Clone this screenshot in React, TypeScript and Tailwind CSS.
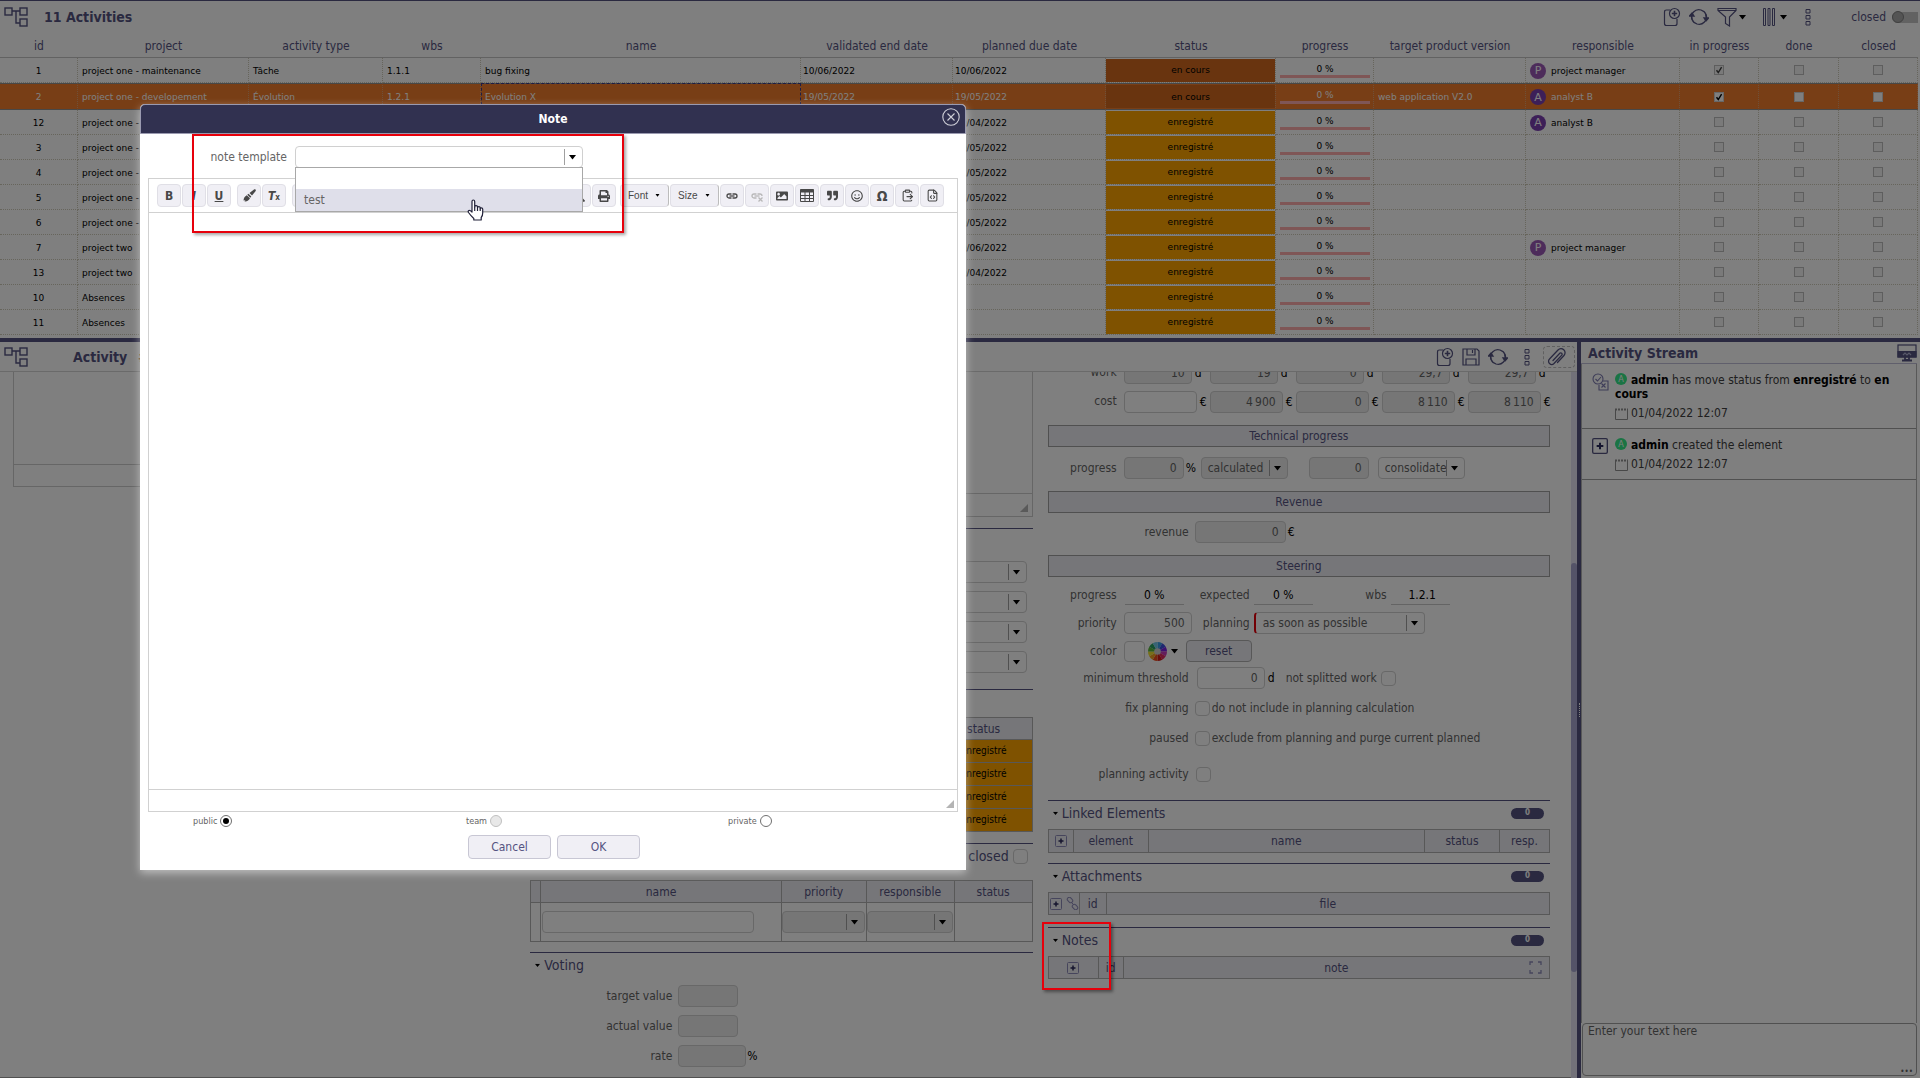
import type { ReactNode } from "react";
import { clsx } from "clsx";
import { ClipboardPaste, FileCode } from "lucide-react";
import {
  FaAlignCenter,
  FaAlignJustify,
  FaAlignLeft,
  FaAlignRight,
  FaHighlighter,
  FaImage,
  FaIndent,
  FaListOl,
  FaListUl,
  FaOutdent,
  FaPalette,
  FaPrint,
  FaQuoteRight,
  FaRegSmile,
  FaSearch,
  FaStrikethrough,
} from "react-icons/fa";

type Activity = {
  id: number;
  project: string;
  type?: string;
  wbs?: string;
  name?: string;
  validated?: string;
  planned?: string;
  status: "en cours" | "enregistré";
  version?: string;
  responsible?: string;
  inProgress?: boolean;
  selected?: boolean;
};

const activities: Activity[] = [
  { id: 1, project: "project one - maintenance", type: "Tâche", wbs: "1.1.1", name: "bug fixing", validated: "10/06/2022", planned: "10/06/2022", status: "en cours", responsible: "project manager", inProgress: true },
  { id: 2, project: "project one - developement", type: "Évolution", wbs: "1.2.1", name: "Evolution X", validated: "19/05/2022", planned: "19/05/2022", status: "en cours", version: "web application V2.0", responsible: "analyst B", inProgress: true, selected: true },
  { id: 12, project: "project one - maintenance", planned: "29/04/2022", status: "enregistré", responsible: "analyst B" },
  { id: 3, project: "project one - developement", planned: "10/05/2022", status: "enregistré" },
  { id: 4, project: "project one - developement", planned: "12/05/2022", status: "enregistré" },
  { id: 5, project: "project one - developement", planned: "17/05/2022", status: "enregistré" },
  { id: 6, project: "project one - developement", planned: "19/05/2022", status: "enregistré" },
  { id: 7, project: "project two", planned: "10/06/2022", status: "enregistré", responsible: "project manager" },
  { id: 13, project: "project two", planned: "29/04/2022", status: "enregistré" },
  { id: 10, project: "Absences", status: "enregistré" },
  { id: 11, project: "Absences", status: "enregistré" },
];

const columns = [
  { label: "id", width: "w-[78px]" },
  { label: "project", width: "w-[171px]" },
  { label: "activity type", width: "w-[134px]" },
  { label: "wbs", width: "w-[98px]" },
  { label: "name", width: "w-[320px]" },
  { label: "validated end date", width: "w-[152px]" },
  { label: "planned due date", width: "w-[153px]" },
  { label: "status", width: "w-[170px]" },
  { label: "progress", width: "w-[98px]" },
  { label: "target product version", width: "w-[152px]" },
  { label: "responsible", width: "w-[154px]" },
  { label: "in progress", width: "w-[79px]" },
  { label: "done", width: "w-[80px]" },
  { label: "closed", width: "w-[79px]" },
];

/* ---------- icons ---------- */

function TreeIcon() {
  return (
    <svg width="24" height="20" viewBox="0 0 24 20" fill="none" stroke="currentColor" strokeWidth="1.4">
      <rect x="1" y="1" width="7" height="7" />
      <rect x="16" y="1" width="7" height="7" />
      <rect x="16" y="12" width="7" height="7" />
      <path d="M8 4h8M12 4v12h4" />
    </svg>
  );
}

function AddIcon() {
  return (
    <svg width="18" height="20" viewBox="0 0 18 20" fill="none" stroke="currentColor" strokeWidth="1.2">
      <path d="M7 3H3.500Q1.500 3 1.500 5v11.500q0 2 2 2h8.500q2 0 2-2V12" />
      <circle cx="11.500" cy="6.500" r="5" />
      <path d="M11.500 3.800v5.400M8.800 6.500h5.400" strokeWidth="1.600" />
    </svg>
  );
}

function RefreshIcon() {
  return (
    <svg width="20" height="20" viewBox="0 0 20 20" fill="none" stroke="currentColor" strokeWidth="1.3">
      <path d="M3 12.500A7.300 7.300 0 0 1 12 3l3 1.600a7.300 7.300 0 0 1 2.300 6" />
      <path d="M17 7.500A7.300 7.300 0 0 1 8 17l-3-1.600a7.300 7.300 0 0 1-2.300-6" />
      <path d="M15 11h4.500L17 14z" fill="currentColor" />
      <path d="M.500 9H5L3 6z" fill="currentColor" />
    </svg>
  );
}

function FilterIcon() {
  return (
    <svg width="20" height="20" viewBox="0 0 20 20" fill="none" stroke="currentColor" strokeWidth="1.2">
      <path d="M1 1.500h18v2l-6.500 6.500v9l-4-2.500V10L1 3.500zM1 3.500h18" />
    </svg>
  );
}

function ColumnsIcon() {
  return (
    <svg width="14" height="20" viewBox="0 0 14 20" fill="none" stroke="currentColor">
      <path d="M1.500 1.500h2v17h-2zM6 1.500h2v17H6zM10.500 1.500h2v17h-2z" />
    </svg>
  );
}

function DotsIcon() {
  return (
    <svg width="6" height="18" viewBox="0 0 6 18" fill="none" stroke="currentColor">
      <path d="M1 1.500h4v3.500H1zM1 7.500h4V11H1zM1 13.500h4V17H1z" />
    </svg>
  );
}

function SaveIcon() {
  return (
    <svg width="18" height="18" viewBox="0 0 18 18" fill="none" stroke="currentColor" strokeWidth="1.2">
      <path d="M1 1h14l2 2v14H1zM5 1v6h8V1M10.500 2v3M4 17v-6h10v6" />
    </svg>
  );
}

function ClipIcon() {
  return (
    <svg width="20" height="20" viewBox="0 0 20 20" fill="none" stroke="currentColor" strokeWidth="1.300" strokeLinecap="round">
      <path d="M6 13.500 13 6a1.500 1.500 0 0 1 2 2l-8 8.500a3 3 0 0 1-4.500-4.500L11 3a4 4 0 0 1 6 5.500l-6.500 7" />
    </svg>
  );
}

function Caret({ className }: { className?: string }) {
  return (
    <svg width="7" height="5" viewBox="0 0 7 5" className={clsx("shrink-0 text-black", className)}>
      <path d="M0 0h7L3.500 4.500z" fill="currentColor" />
    </svg>
  );
}

function PlusBox({ size = 12, frame = "#8c8ab8" }: { size?: number; frame?: string }) {
  return (
    <svg width={size} height={size} viewBox="0 0 12 12" fill="none">
      <rect x=".5" y=".5" width="11" height="11" rx="1" stroke={frame} />
      <path d="M6 3.500v5M3.500 6h5" strokeWidth="1.500" stroke="#2b2a5c" />
    </svg>
  );
}

function ChainIcon({ broken }: { broken?: boolean }) {
  return (
    <svg width="12" height="12" viewBox="0 0 12 12" fill="none" stroke="currentColor" strokeWidth="1.300">
      <path d="M5.500 8H3a2 2 0 0 1 0-4h2.500" />
      <path d={broken ? "M6.500 4H9a2 2 0 0 1 2 2" : "M6.500 4H9a2 2 0 0 1 0 4H6.500"} />
      <path d="M3.500 6h5" />
      {broken && <path d="m7.500 7.500 4 4M11.500 7.500l-4 4" />}
    </svg>
  );
}

function TableIcon() {
  return (
    <svg width="14" height="13" viewBox="0 0 14 13" fill="none" stroke="currentColor">
      <path d="M.5.500h13v12H.5zM.5 6.500h13M.5 9.500h13M5 3v9.500M9.500 3v9.500" />
      <path d="M.5 2h13" strokeWidth="3" />
    </svg>
  );
}

function Grip() {
  return (
    <svg width="8" height="8" viewBox="0 0 8 8">
      <path d="M8 0v8H0z" fill="#b4b4b4" />
    </svg>
  );
}

function ColorWheel() {
  const slices = ["#3aa0e8", "#3c50e0", "#7a20e0", "#c83ab8", "#e02860", "#d01818", "#f04818", "#f0a020", "#f0e030", "#58b838", "#28a060", "#70c8e8"];
  return (
    <svg width="19" height="19" viewBox="-10 -10 20 20">
      {slices.map((color, i) => (
        <path key={color} d="M0 0V-10A10 10 0 0 1 5 -8.660z" fill={color} transform={`rotate(${i * 30})`} />
      ))}
      <circle r="3.500" fill="#d0d0d0" />
    </svg>
  );
}

/* ---------- form parts ---------- */

const fieldBorder = "rounded-[4px] border border-[#d0d0d0]";

function Field({ label, value = "", className, disabled = true, id }: { label: string; value?: string; className?: string; disabled?: boolean; id?: string }) {
  return (
    <input
      id={id}
      aria-label={label}
      defaultValue={value}
      disabled={disabled}
      className={clsx("h-[22px] shrink-0 px-[6px] text-right text-[#656565]", fieldBorder, disabled ? "bg-[#ececec]" : "bg-white", className)}
    />
  );
}

function Select({ label, value = "", className, disabled, id }: { label: string; value?: string; className?: string; disabled?: boolean; id?: string }) {
  return (
    <div className={clsx("relative h-[22px] shrink-0 overflow-hidden", fieldBorder, disabled ? "bg-[#ececec]" : "bg-white", className)}>
      <select id={id} aria-label={label} disabled={disabled} className="h-full w-full appearance-none pr-[18px] pl-[6px] text-[#656565] opacity-100">
        <option>{value}</option>
      </select>
      <span className="pointer-events-none absolute top-[2px] right-0 flex h-4 w-[18px] items-center border-l border-[#a0a0a0] pl-1">
        <Caret />
      </span>
    </div>
  );
}

function Check({ label, id }: { label?: string; id?: string }) {
  return <input type="checkbox" id={id} aria-label={label} className={clsx("size-[15px] shrink-0 appearance-none bg-white", fieldBorder)} />;
}

function SmallCheck({ label, checked, bright }: { label: string; checked?: boolean; bright?: boolean }) {
  return (
    <span className="relative mx-auto block size-[10px]">
      <input
        type="checkbox"
        aria-label={label}
        defaultChecked={checked}
        className={clsx("block size-[10px] appearance-none border", bright ? "border-[#d0d0d0] bg-white" : "border-[#bcbcbc] bg-[#f4f4f4]")}
      />
      {checked && (
        <svg viewBox="0 0 10 10" className="pointer-events-none absolute inset-0" fill="none" stroke={bright ? "#000" : "#404040"} strokeWidth="1.400">
          <path d="M2.500 5.200 4.300 7.500 7.600 2.200" />
        </svg>
      )}
    </span>
  );
}

function Avatar({ name }: { name: string }) {
  return (
    <span className={clsx("flex size-4 items-center justify-center rounded-full text-[11px] leading-none text-white", name[0] === "p" ? "bg-[#9b59b6]" : "bg-[#7b3fb0]")}>
      {name[0].toUpperCase()}
    </span>
  );
}

function Label({ children, className, htmlFor }: { children: ReactNode; className?: string; htmlFor?: string }) {
  return (
    <label htmlFor={htmlFor} className={clsx("shrink-0 text-right text-[#656565]", className)}>
      {children}
    </label>
  );
}

function Bar({ children, className }: { children: ReactNode; className?: string }) {
  return <h3 className={clsx("flex h-[22px] items-center justify-center border border-[#a0a0a0] bg-[#ececf2]", className)}>{children}</h3>;
}

function Badge() {
  return <span className="flex h-[11px] w-[33px] items-center justify-center rounded-full bg-[#545381] text-[8px] leading-none font-bold text-white">0</span>;
}

function Section({ title, children, badge = true, className }: { title: string; children: ReactNode; badge?: boolean; className?: string }) {
  return (
    <section className={clsx("relative border-t border-[#545381]", className)}>
      <h2 className="flex h-6 items-center gap-[3px] pr-[6px] pl-1 text-sm">
        <Caret className="scale-75" />
        <span className="flex-1">{title}</span>
        {badge && <Badge />}
      </h2>
      {children}
    </section>
  );
}

const th = "border border-[#b0b0b0] bg-[#ececf2] p-0 font-normal";

function Work({ label, values, unit, top }: { label: string; values: string[]; unit: string; top?: boolean }) {
  return (
    <div className={clsx("flex items-center", top ? "-mt-[10px]" : "mt-[7px]")}>
      <span className="w-[69px] shrink-0 pb-[2px] text-right text-[#656565]">{label}</span>
      <div className="ml-[7px] flex">
        {values.map((value, i) => (
          <div key={i} className="flex w-[86px] items-center gap-[3px]">
            <Field label={`${label} ${i + 1}`} value={value} disabled={top || i > 0} className={top ? "w-[68px]" : "w-[73px]"} />
            <span className="text-black">{unit}</span>
          </div>
        ))}
      </div>
    </div>
  );
}

/* ---------- panels ---------- */

function ActivityList() {
  return (
    <section className="shrink-0 border-t border-[#545381] pr-[2px] pb-[3px]">
      <header className="flex h-8 items-center">
        <div className="w-11 pl-1">
          <TreeIcon />
        </div>
        <h1 className="flex-1 text-sm font-bold">11 Activities</h1>
        <div className="flex items-center">
          <button aria-label="Add" className="mr-2"><AddIcon /></button>
          <button aria-label="Refresh" className="mr-2"><RefreshIcon /></button>
          <button aria-label="Filter" className="flex items-center gap-[2px]"><FilterIcon /><Caret /></button>
          <button aria-label="Columns" className="ml-4 flex items-center gap-1"><ColumnsIcon /><Caret /></button>
          <button aria-label="More" className="mr-10 ml-[18px]"><DotsIcon /></button>
          <label htmlFor="show-closed">closed</label>
          <span className="relative ml-[6px] flex h-[11px] w-[26px] items-center rounded-l-full bg-[#c4c4c4]">
            <input id="show-closed" type="checkbox" role="switch" className="size-3 appearance-none rounded-full border border-[#808080] bg-[#a8a8a8]" />
          </span>
        </div>
      </header>
      <table className="w-full table-fixed border-separate border-spacing-0">
        <thead>
          <tr>
            {columns.map((c) => (
              <th key={c.label} className={clsx("h-[25px] border-b border-[#c4c4c4] p-0 pt-px text-center font-normal whitespace-nowrap", c.width)}>
                {c.label}
              </th>
            ))}
          </tr>
        </thead>
        <tbody>
          {activities.map((a) => {
            const cell = clsx(
              "border-r p-0 font-[DejaVu_Sans] text-[9px] whitespace-nowrap overflow-hidden",
              a.selected
                ? "h-[27px] border-y border-y-[#909090] border-r-[#e0a070] border-r-[1px] [border-right-style:dotted] bg-[#f07c2c] text-white"
                : "h-[25px] border-b border-dotted border-[#cfcbb8] text-black"
            );
            return (
              <tr key={a.id}>
                <td className={clsx(cell, "pt-px text-center")}>{a.id}</td>
                <td className={clsx(cell, "pt-px pl-1")}>{a.project}</td>
                <td className={clsx(cell, "pt-px pl-1")}>{a.type}</td>
                <td className={clsx(cell, "pt-px pl-1")}>{a.wbs}</td>
                <td className={clsx(cell, "pt-px pl-1", a.selected && "outline-1 -outline-offset-1 outline-dashed outline-[#3c3b8a]")}>{a.name}</td>
                <td className={clsx(cell, "pt-px pl-[2px]")}>{a.validated}</td>
                <td className={clsx(cell, "pt-px pl-[2px]")}>{a.planned}</td>
                <td className={cell}>
                  <div className={clsx("flex h-[23px] items-center justify-center text-black", a.status === "en cours" ? "bg-[#d2691e]" : "bg-[#ffa500]")}>
                    {a.status}
                  </div>
                </td>
                <td className={cell}>
                  <div className="mr-[3px] ml-1 border-b-[3px] border-[#ffacac] text-center leading-3">0 %</div>
                </td>
                <td className={clsx(cell, "pt-px pl-1")}>{a.version}</td>
                <td className={clsx(cell, "pt-px pl-1")}>
                  {a.responsible && (
                    <div className="flex items-center gap-[5px]">
                      <Avatar name={a.responsible} />
                      {a.responsible}
                    </div>
                  )}
                </td>
                <td className={cell}><SmallCheck label={`in progress ${a.id}`} checked={a.inProgress} bright={a.selected} /></td>
                <td className={cell}><SmallCheck label={`done ${a.id}`} bright={a.selected} /></td>
                <td className={cell}><SmallCheck label={`closed ${a.id}`} bright={a.selected} /></td>
              </tr>
            );
          })}
        </tbody>
      </table>
    </section>
  );
}

function Description() {
  return (
    <div className="min-w-0 flex-1">
      <div className="border border-t-0 border-[#cccccc]">
        <div className="h-[92px]" />
        <div className="h-[22px] border-t border-[#cccccc]" />
      </div>
    </div>
  );
}

function Treatment() {
  return (
    <div className="min-w-0 flex-1">
      <div className="border border-t-0 border-[#cccccc]">
        <div className="h-[121px]" />
        <div className="flex h-[23px] items-end justify-end border-t border-[#cccccc] p-1">
          <Grip />
        </div>
      </div>
      <div className="mt-[11px] flex flex-col gap-2 border-t border-[#545381] pt-8 pr-[6px] pl-[148px]">
        {["status", "responsible", "criticality", "product"].map((name) => (
          <Select key={name} label={name} />
        ))}
      </div>
      <div className="mt-4 border-t border-[#545381] pt-[27px]">
        <table className="w-full table-fixed border-collapse">
          <thead>
            <tr className="h-[22px]">
              <th className={th}>name</th>
              <th className={clsx(th, "w-[97px]")}>status</th>
            </tr>
          </thead>
          <tbody>
            {[3, 4, 5, 6].map((id) => (
              <tr key={id} className="h-[23px]">
                <td className="border border-[#b0b0b0] p-0" />
                <td className="border border-[#b0b0b0] bg-[#ffa500] p-0 text-center text-[10px] text-black">enregistré</td>
              </tr>
            ))}
          </tbody>
        </table>
      </div>
      <div className="mt-[11px] border-t border-[#545381]">
        <div className="flex h-6 items-center justify-end gap-1 pr-[5px] text-sm">
          <label htmlFor="todo-closed">closed</label>
          <Check id="todo-closed" />
        </div>
        <table className="mt-3 w-full table-fixed border-collapse">
          <thead>
            <tr className="h-[22px]">
              <th className={clsx(th, "w-[10px]")} />
              <th className={th}>name</th>
              <th className={clsx(th, "w-[85px]")}>priority</th>
              <th className={clsx(th, "w-[88px]")}>responsible</th>
              <th className={clsx(th, "w-[78px]")}>status</th>
            </tr>
          </thead>
          <tbody>
            <tr className="h-[39px]">
              <td className="border border-[#b0b0b0] p-0" />
              <td className="border border-[#b0b0b0] p-0 pl-px">
                <Field label="sub task name" disabled={false} className="block w-[212px]" />
              </td>
              <td className="border border-[#b0b0b0] p-0 pr-px"><Select label="priority" disabled /></td>
              <td className="border border-[#b0b0b0] p-0 pr-px"><Select label="responsible" disabled /></td>
              <td className="border border-[#b0b0b0] p-0" />
            </tr>
          </tbody>
        </table>
      </div>
      <Section title="Voting" badge={false} className="mt-[10px]">
        <div className="mt-2 flex flex-col gap-2">
          {["target value", "actual value", "rate"].map((name) => (
            <div key={name} className="flex items-center">
              <span className="mr-[6px] w-[142px] text-right text-[#656565]">{name}</span>
              <Field label={name} className={name === "rate" ? "w-[68px]" : "w-[60px]"} />
              {name === "rate" && <span className="ml-px text-black">%</span>}
            </div>
          ))}
        </div>
      </Section>
    </div>
  );
}

function Progress() {
  const shown = "ml-1 h-5 w-[59px] shrink-0 border-b border-[#c8c8c8] pt-[2px] text-center text-black";
  return (
    <div className="min-w-0 flex-1">
      <Work label="work" values={["10", "19", "0", "29,7", "29,7"]} unit="d" top />
      <Work label="cost" values={["", "4\u2009900", "0", "8\u2009110", "8\u2009110"]} unit="€" />
      <Bar className="mt-3">Technical progress</Bar>
      <div className="mt-[10px] flex items-center">
        <Label className="mr-[7px] w-[69px]">progress</Label>
        <Field label="technical progress" value="0" className="w-[60px]" />
        <span className="ml-[2px] w-[15px] text-black">%</span>
        <Select label="progress mode" value="calculated" disabled className="w-[87px]" />
        <Field label="weight" value="0" className="ml-[21px] w-[60px]" />
        <Select label="weight mode" value="consolidated" className="ml-[9px] w-[87px]" />
      </div>
      <Bar className="mt-3">Revenue</Bar>
      <div className="mt-2 flex items-center">
        <Label className="mr-[6px] w-[141px]">revenue</Label>
        <Field label="revenue" value="0" className="w-[91px]" />
        <span className="ml-[2px] text-black">€</span>
      </div>
      <Bar className="mt-3">Steering</Bar>
      <div className="mt-2 flex items-center">
        <Label className="mr-1 w-[69px]">progress</Label>
        <output className={shown}>0 %</output>
        <Label className="w-[66px]">expected</Label>
        <output className={shown}>0 %</output>
        <Label className="w-[74px]">wbs</Label>
        <output className={clsx(shown, "pl-1")}>1.2.1</output>
      </div>
      <div className="mt-[7px] flex items-center">
        <Label className="mr-[7px] w-[69px]" htmlFor="priority">priority</Label>
        <Field id="priority" label="priority" value="500" disabled={false} className="w-[68px]" />
        <Label className="mr-1 w-[58px]" htmlFor="planning">planning</Label>
        <Select id="planning" label="planning" value="as soon as possible" className="w-[171px] border-l-2 border-l-red-600 pl-px" />
      </div>
      <div className="mt-[6px] flex items-center">
        <Label className="mr-[7px] w-[69px]">color</Label>
        <span className={clsx("size-[21px]", fieldBorder)} />
        <button aria-label="Pick color" className="ml-[3px] flex items-center gap-1">
          <ColorWheel />
          <Caret />
        </button>
        <button className="ml-2 h-[22px] w-[66px] rounded-[4px] border border-[#b0b0b0] bg-[#ececf2]">reset</button>
      </div>
      <div className="mt-[5px] flex items-center">
        <Label className="mr-[8px] w-[141px]" htmlFor="threshold">minimum threshold</Label>
        <Field id="threshold" label="minimum threshold" value="0" disabled={false} className="w-[68px]" />
        <span className="ml-[3px] w-[18px] text-black">d</span>
        <Label className="mr-1" htmlFor="split">not splitted work</Label>
        <Check id="split" />
      </div>
      <div className="mt-2 flex h-[22px] items-center">
        <Label className="mr-[6px] w-[141px]" htmlFor="fix">fix planning</Label>
        <Check id="fix" />
        <span className="ml-[2px] text-[#656565]">do not include in planning calculation</span>
      </div>
      <div className="mt-2 flex h-[22px] items-center">
        <Label className="mr-[6px] w-[141px]" htmlFor="paused">paused</Label>
        <Check id="paused" />
        <span className="ml-[2px] text-[#656565]">exclude from planning and purge current planned</span>
      </div>
      <div className="mt-[14px] flex h-[22px] items-center">
        <Label className="mr-[7px] w-[141px]" htmlFor="plan-activity">planning activity</Label>
        <Check id="plan-activity" />
      </div>

      <Section title="Linked Elements" className="mt-[15px]">
        <table className="mt-1 w-full table-fixed border-collapse">
          <thead>
            <tr className="h-[23px]">
              <th className={clsx(th, "w-[25px]")}><button aria-label="Add element" className="flex w-full justify-center"><PlusBox /></button></th>
              <th className={clsx(th, "w-[75px]")}>element</th>
              <th className={th}>name</th>
              <th className={clsx(th, "w-[75px]")}>status</th>
              <th className={clsx(th, "w-[50px]")}>resp.</th>
            </tr>
          </thead>
        </table>
      </Section>
      <Section title="Attachments" className="mt-[10px]">
        <table className="mt-1 w-full table-fixed border-collapse">
          <thead>
            <tr className="h-[22px]">
              <th className={clsx(th, "w-[31px]")}>
                <span className="flex items-center gap-1 pl-px">
                  <button aria-label="Add file"><PlusBox /></button>
                  <button aria-label="Add link" className="text-[#8c8ab8]">
                    <svg width="13" height="13" viewBox="0 0 13 13" fill="none" stroke="currentColor">
                      <rect x="1" y="1" width="6" height="4" rx="2" transform="rotate(45 4 3)" />
                      <rect x="6" y="8" width="6" height="4" rx="2" transform="rotate(45 9 10)" />
                      <path d="m5 5 3 3" />
                    </svg>
                  </button>
                </span>
              </th>
              <th className={clsx(th, "w-[27px]")}>id</th>
              <th className={th}>file</th>
            </tr>
          </thead>
        </table>
      </Section>
      <Section title="Notes" className="mt-3">
        <table className="mt-1 w-full table-fixed border-collapse">
          <thead>
            <tr className="h-[22px]">
              <th className={clsx(th, "w-[50px]")}><button aria-label="Add note" className="flex w-full justify-center"><PlusBox /></button></th>
              <th className={clsx(th, "w-[25px]")}>id</th>
              <th className={th}>
                <span className="flex items-center pr-[7px] pl-5">
                  <span className="flex-1">note</span>
                  <button aria-label="Expand" className="text-[#8c8ab8]">
                    <svg width="13" height="13" viewBox="0 0 13 13" fill="none" stroke="currentColor" strokeWidth="1.300">
                      <path d="M1 4V1h3M9 1h3v3M12 9v3H9M4 12H1V9" />
                    </svg>
                  </button>
                </span>
              </th>
            </tr>
          </thead>
        </table>
        <span className="pointer-events-none absolute -top-[6px] -left-[6px] z-30 h-[68px] w-[69px] border-2 border-red-600 shadow-[2px_2px_3px_rgba(0,0,0,0.4)]" />
      </Section>
    </div>
  );
}

function Detail() {
  return (
    <section className="flex min-w-0 flex-1 flex-col">
      <header className="flex h-[30px] shrink-0 items-center border-b border-[#d4d4d4]">
        <div className="w-[73px] pl-1"><TreeIcon /></div>
        <h2 className="w-[65px] text-sm font-bold">Activity</h2>
        <a href="#activity-2" className="flex-1 text-sm font-bold text-[#c08040]">#2</a>
        <button aria-label="New" className="mr-2"><AddIcon /></button>
        <button aria-label="Save" className="mr-2"><SaveIcon /></button>
        <button aria-label="Refresh" className="mr-4"><RefreshIcon /></button>
        <button aria-label="More" className="mr-[13px]"><DotsIcon /></button>
        <button aria-label="Attach" className="mr-[2px] flex h-[22px] w-8 items-center justify-center rounded-[4px] border border-dashed border-[#c0c0c0] pr-1"><ClipIcon /></button>
      </header>
      <div className="flex min-h-0 flex-1">
        <div className="flex min-w-0 flex-1 gap-[15px] overflow-hidden border-b border-[#a0a0a0] pr-[21px] pl-[13px]">
          <Description />
          <Treatment />
          <Progress />
        </div>
        <div className="flex w-[6px] flex-col bg-[#e4e2f2] pt-[191px] pb-[106px]">
          <div className="flex-1 rounded-full bg-[#a8a6d0]" />
        </div>
      </div>
    </section>
  );
}

function StreamEntry({ icon, children, className }: { icon: ReactNode; children: ReactNode; className?: string }) {
  return (
    <li className={clsx("flex border-b border-[#a0a0a0] pt-[9px] text-[#404040]", className)}>
      <div className="w-[33px] shrink-0 pl-[10px] text-[#7c7ab0]">{icon}</div>
      <div>
        <p className="leading-[14px]">
          <span className="mr-1 inline-flex size-3 items-center justify-center rounded-full bg-[#34e888] align-top text-[9px] leading-none text-white">A</span>
          {children}
        </p>
        <p className="mt-1 flex items-center gap-[3px]">
          <svg width="13" height="13" viewBox="0 0 13 13" fill="none" stroke="#909090">
            <path d="M.5 2.500v10h12v-10" />
            <path d="M0 2.500h13" strokeDasharray="2 1" strokeWidth="2" />
          </svg>
          01/04/2022 12:07
        </p>
      </div>
    </li>
  );
}

function Stream() {
  return (
    <aside className="flex w-[339px] shrink-0 flex-col pr-[3px]">
      <header className="flex h-[22px] shrink-0 items-center justify-between border-b border-[#c0bed8] pl-[7px]">
        <h2 className="pt-px text-sm font-bold">Activity Stream</h2>
        <svg width="20" height="18" viewBox="0 0 20 18" fill="none" stroke="currentColor" strokeWidth="1.200">
          <rect x="1" y="1" width="18" height="12" />
          <path d="M1 7.500h18V13H1z" fill="currentColor" />
          <path d="m6 11 2-2 2 2 2-2 2 2" stroke="#b0b0d0" />
          <path d="M8 13v3h4v-3M5 16.500h10" strokeWidth="1.800" />
        </svg>
      </header>
      <ul className="flex-1 border-x border-[#b0b0b0]">
        <StreamEntry
          className="h-[65px]"
          icon={
            <svg width="17" height="18" viewBox="0 0 17 18" fill="none" stroke="currentColor" strokeWidth="1.100">
              <circle cx="6" cy="6" r="5" />
              <path d="m3.500 6 2 2 3.500-4" />
              <path d="M11 8h5v9H7v-5" />
              <path d="m9.500 10.500 4 4M13.500 10.500l-4 4" />
            </svg>
          }
        >
          <b className="text-black">admin</b> has move status from <b className="text-black">enregistré</b> to <b className="text-black">en cours</b>
        </StreamEntry>
        <StreamEntry className="h-[51px]" icon={<PlusBox size={16} frame="#545381" />}>
          <b className="text-black">admin</b> created the element
        </StreamEntry>
      </ul>
      <div className="relative mb-[2px] ml-px">
        <textarea aria-label="New comment" placeholder="Enter your text here" className="block h-[53px] w-full resize-none rounded-[4px] border border-[#a0a0a0] bg-transparent px-[5px] leading-[14px] placeholder:text-[#656565]" />
        <span className="absolute right-1 bottom-0 text-[8px] leading-2 text-[#656565]">•••</span>
      </div>
    </aside>
  );
}

/* ---------- note dialog ---------- */

function Tool({ children, label, faded }: { children: ReactNode; label: string; faded?: boolean }) {
  return (
    <button
      aria-label={label}
      className={clsx("flex h-[23px] w-6 items-center justify-center rounded-[4px] border border-[#e0dfe6] bg-[#f0eff5] text-xs", faded ? "text-[#b8b8b8]" : "text-[#484848]")}
    >
      {children}
    </button>
  );
}

const comboButton = "flex h-[23px] w-[49px] items-center justify-between rounded-[4px] border border-[#e0dfe6] border-r-[#bcbcbc] bg-[#f0eff5] px-[7px]";

function Editor() {
  return (
    <div className="border border-[#d1d1d1]">
      <div className="flex h-[34px] items-center gap-[6px] border-b border-[#d1d1d1] px-2">
        <div className="flex gap-px">
          <Tool label="Bold"><b>B</b></Tool>
          <Tool label="Italic"><i className="font-bold">I</i></Tool>
          <Tool label="Underline"><b className="underline">U</b></Tool>
        </div>
        <div className="flex gap-px">
          <Tool label="Copy formatting">
            <svg width="13" height="13" viewBox="0 0 13 13" fill="currentColor">
              <path d="M12.500.500c.700.700.300 1.300 0 1.700L9 6.500 6.500 4 11 .500c.500-.400 1-.500 1.500 0zM5.500 4.700l2.800 2.800-1 1.300-3-3zM3.800 6.200 7 9.300C6 11.500 4 12.800 1.500 12.500l1-1.300L.5 11.500c.200-2.500 1.300-4.300 3.300-5.300z" />
            </svg>
          </Tool>
          <Tool label="Remove format"><i className="font-bold">T</i><sub className="text-[8px] font-bold">x</sub></Tool>
        </div>
        <div className="flex gap-px">
          <Tool label="Strike"><FaStrikethrough /></Tool>
          <Tool label="Numbered list"><FaListOl /></Tool>
          <Tool label="Bulleted list"><FaListUl /></Tool>
          <Tool label="Outdent"><FaOutdent /></Tool>
          <Tool label="Indent"><FaIndent /></Tool>
          <Tool label="Align left"><FaAlignLeft /></Tool>
          <Tool label="Center"><FaAlignCenter /></Tool>
          <Tool label="Align right"><FaAlignRight /></Tool>
          <Tool label="Justify"><FaAlignJustify /></Tool>
          <Tool label="Text color"><FaPalette /></Tool>
          <Tool label="Background color"><FaHighlighter /></Tool>
          <Tool label="Find"><FaSearch /></Tool>
          <Tool label="Print"><FaPrint /></Tool>
        </div>
        <div className="-ml-[2px] flex gap-px font-['Liberation_Sans',sans-serif] text-[10px] text-[#484848]">
          <button className={comboButton}>
            Font <Caret className="scale-60" />
          </button>
          <button className={comboButton}>
            Size <Caret className="scale-60" />
          </button>
        </div>
        <div className="-ml-[5px] flex gap-px">
          <Tool label="Link"><ChainIcon /></Tool>
          <Tool label="Unlink" faded><ChainIcon broken /></Tool>
          <Tool label="Image"><FaImage /></Tool>
          <Tool label="Table"><TableIcon /></Tool>
          <Tool label="Quote"><FaQuoteRight size={11} /></Tool>
          <Tool label="Smiley"><FaRegSmile /></Tool>
          <Tool label="Special character"><b className="text-sm leading-none">Ω</b></Tool>
          <Tool label="Paste"><ClipboardPaste size={13} /></Tool>
          <Tool label="Source"><FileCode size={13} /></Tool>
        </div>
      </div>
      <textarea aria-label="Note text" className="block h-[576px] w-full resize-none outline-none" />
      <div className="flex h-[22px] items-end justify-end border-t border-[#d1d1d1] p-[3px]">
        <Grip />
      </div>
    </div>
  );
}

function Radio({ label, checked, disabled, className }: { label: string; checked?: boolean; disabled?: boolean; className?: string }) {
  return (
    <label className={clsx("flex items-center gap-[3px]", className)}>
      {label}
      <span className={clsx("relative flex size-3 items-center justify-center rounded-full border", disabled ? "border-[#c0c0c0] bg-[#e8e8e8]" : "border-[#707070] bg-white")}>
        <input type="radio" name="privacy" defaultChecked={checked} disabled={disabled} className="size-[6px] appearance-none rounded-full checked:bg-black" />
      </span>
    </label>
  );
}

function NoteDialog() {
  return (
    <div role="dialog" aria-labelledby="dialog-title" className="absolute top-[104px] left-[140px] z-20 w-[826px] rounded-t-[5px] bg-white shadow-[0_3px_8px_rgba(255,255,255,0.5)]">
      <div className="relative flex h-[30px] items-center justify-center rounded-t-[5px] border border-[#9a9ab0] bg-[#313150] text-white">
        <h2 id="dialog-title" className="font-bold">Note</h2>
        <button aria-label="Close" className="absolute top-[3px] right-[5px] text-[#d0d0d8]">
          <svg width="18" height="18" viewBox="0 0 18 18" fill="none" stroke="currentColor" strokeWidth="1.100">
            <circle cx="9" cy="9" r="8.200" />
            <path d="m5.500 5.500 7 7M12.500 5.500l-7 7" />
          </svg>
        </button>
      </div>
      <div className="flex items-center pt-3 pb-[10px]">
        <Label htmlFor="template" className="mr-2 w-[147px]">note template</Label>
        <div className="relative">
          <Select id="template" label="note template" className="w-[288px]" />
          <ul role="listbox" className="absolute top-[21px] left-0 z-10 w-full border border-[#a8a8a8] bg-white text-[#656565]">
            <li role="option" aria-selected="false" className="h-[21px]" />
            <li role="option" aria-selected="true" className="flex h-[22px] items-center bg-[#dfdfea] pl-2">test</li>
          </ul>
          <svg width="17" height="22" viewBox="0 0 17 22" className="pointer-events-none absolute top-[53px] left-[172px] z-20" fill="#fff" stroke="#202038" strokeWidth="1.200" strokeLinejoin="round">
            <path d="M5 12V2.500q0-1.500 1.300-1.500t1.400 1.500V8q0-1.300 1.400-1.300T10.500 8v.800q0-1.200 1.300-1.200t1.400 1.200v1q0-1 1.200-1t1.300 1.200V14q0 3-1.500 4.500V21H6.800v-1.500Q4 17 1.500 13.500q-.8-1.500.3-2T5 13z" />
            <path d="M7.700 8v4M10.500 8.500V12M13.200 9.500V12" fill="none" />
          </svg>
        </div>
      </div>
      <div className="px-2">
        <Editor />
      </div>
      <div className="flex h-[17px] items-center text-[9px] text-[#656565]">
        <Radio label="public" checked className="ml-[53px] w-[273px]" />
        <Radio label="team" disabled className="w-[262px]" />
        <Radio label="private" />
      </div>
      <div className="flex justify-center gap-[6px] pt-[6px] pb-[11px] pl-[2px] text-[#545381]">
        <button className="h-6 w-[83px] rounded-[4px] border border-[#c8c7d4] bg-[#f0eff5]">Cancel</button>
        <button className="h-6 w-[83px] rounded-[4px] border border-[#c8c7d4] bg-[#f0eff5]">OK</button>
      </div>
      <span className="pointer-events-none absolute top-[30px] left-[52px] z-30 h-[99px] w-[432px] border-2 border-red-600 shadow-[2px_2px_3px_rgba(0,0,0,0.35)]" />
    </div>
  );
}

export default function App() {
  return (
    <div className="relative flex h-screen w-full flex-col overflow-hidden bg-white font-['DejaVu_Sans_Condensed','DejaVu_Sans',sans-serif] text-xs text-[#545381]">
      <ActivityList />
      <div className="h-1 shrink-0 bg-[#545381]" />
      <div className="flex min-h-0 flex-1">
        <Detail />
        <div className="flex w-1 shrink-0 items-center bg-[#545381]">
          <span className="h-[14px] w-[3px] border-r border-dotted border-white" />
        </div>
        <Stream />
      </div>
      <div className="pointer-events-none absolute inset-0 z-10 bg-black/50" />
      <NoteDialog />
    </div>
  );
}
